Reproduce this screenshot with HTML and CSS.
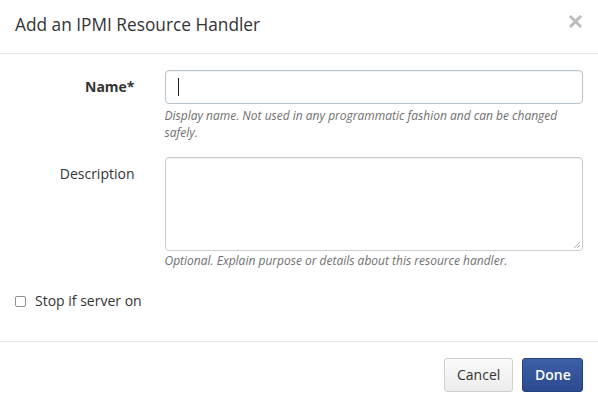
FILE: index.html
```html
<!DOCTYPE html>
<html>
<head>
<meta charset="utf-8">
<link rel="stylesheet" href="styles.css">
</head>
<body>
<div class="modal">
  <div class="modal-header">
    <h4 class="modal-title">Add an IPMI Resource Handler</h4>
    <span class="close">
      <svg width="13" height="13" viewBox="0 0 13 13"><path d="M2 2 L11 11 M11 2 L2 11" stroke="#bcbcbc" stroke-width="3" stroke-linecap="square"/></svg>
    </span>
  </div>
  <div class="modal-body">
    <div class="form-group first">
      <label class="control-label required">Name*</label>
      <div class="control">
        <div class="input"><span class="caret"></span></div>
        <p class="help">Display name. Not used in any programmatic fashion and can be changed safely.</p>
      </div>
    </div>
    <div class="form-group">
      <label class="control-label">Description</label>
      <div class="control">
        <div class="textarea">
          <svg class="grip" width="8" height="8" viewBox="0 0 8 8"><path d="M7 1 L1 7 M7 4 L4 7" stroke="#999" stroke-width="0.8"/></svg>
        </div>
        <p class="help second">Optional. Explain purpose or details about this resource handler.</p>
      </div>
    </div>
    <label class="checkbox"><span class="box"></span>Stop if server on</label>
  </div>
  <div class="modal-footer">
    <button class="btn btn-default">Cancel</button>
    <button class="btn btn-primary">Done</button>
  </div>
</div>
</body>
</html>
```

FILE: styles.css
```css
* { box-sizing: border-box; }
html, body { margin: 0; padding: 0; background: #fff; }
body {
  font-family: "Open Sans", "Noto Sans", sans-serif;
  font-size: 14px;
  line-height: 1.42857;
  color: #333;
  width: 598px;
  height: 407px;
  overflow: hidden;
}
.modal { width: 598px; height: 407px; display: flex; flex-direction: column; }
.modal-header {
  height: 54px;
  border-bottom: 1px solid #e5e5e5;
  padding: 12px 15px 0 15px;
  display: flex;
  justify-content: space-between;
  align-items: flex-start;
}
.modal-title {
  margin: 0;
  font-size: 17.3px;
  font-weight: 400;
  line-height: 26px;
  color: #333;
}
.close { margin-top: 3px; margin-right: 1px; display: flex; }
.modal-body {
  flex: 1;
  padding: 16px 15px 0 15px;
}
.form-group {
  display: grid;
  grid-template-columns: 119.5px 1fr;
  column-gap: 30px;
  margin-bottom: 15px;
}
.form-group.first { margin-bottom: 16px; }
.control-label {
  text-align: right;
  padding-top: 7px;
  line-height: 20px;
}
.control-label.required { font-weight: 700; }
.input {
  height: 34px;
  border: 1px solid #b9c3cc;
  border-radius: 4px;
  padding: 7px 12px;
  box-shadow: inset 0 1px 1px rgba(0,0,0,0.05);
}
.caret {
  display: block;
  width: 1px;
  height: 18px;
  background: #222;
}
.textarea {
  position: relative;
  height: 94px;
  border: 1px solid #ccc;
  border-radius: 4px;
  box-shadow: inset 0 1px 1px rgba(0,0,0,0.05);
}
.grip { position: absolute; right: 1px; bottom: 1px; }
.help {
  margin: 3px 0 0 0;
  font-size: 12px;
  line-height: 17px;
  font-style: italic;
  color: #6f6f6f;
}
.help.second { margin-top: 1px; }
.checkbox {
  display: flex;
  align-items: center;
  margin-top: 22px;
  line-height: 20px;
  color: #333;
}
.box {
  width: 11px;
  height: 11px;
  border: 1px solid #8f8f8f;
  border-radius: 2px;
  margin: 0 9px 0 0;
  background: #fff;
}
.modal-footer {
  height: 66px;
  border-top: 1px solid #e5e5e5;
  padding: 16px 15px 15px 15px;
  display: flex;
  justify-content: flex-end;
  gap: 9px;
}
.btn {
  font-family: "Open Sans", "Noto Sans", sans-serif;
  font-size: 14px;
  line-height: 20px;
  height: 34px;
  padding: 6px 12px;
  border-radius: 3px;
  cursor: pointer;
}
.btn-default {
  width: 69px;
  color: #333;
  background: linear-gradient(#fafafa, #ececec);
  border: 1px solid #cfcfcf;
}
.btn-primary {
  width: 61px;
  color: #fff;
  font-weight: 600;
  background: linear-gradient(#3d60a8, #2c4a8f);
  border: 1px solid #253f7d;
}
```
